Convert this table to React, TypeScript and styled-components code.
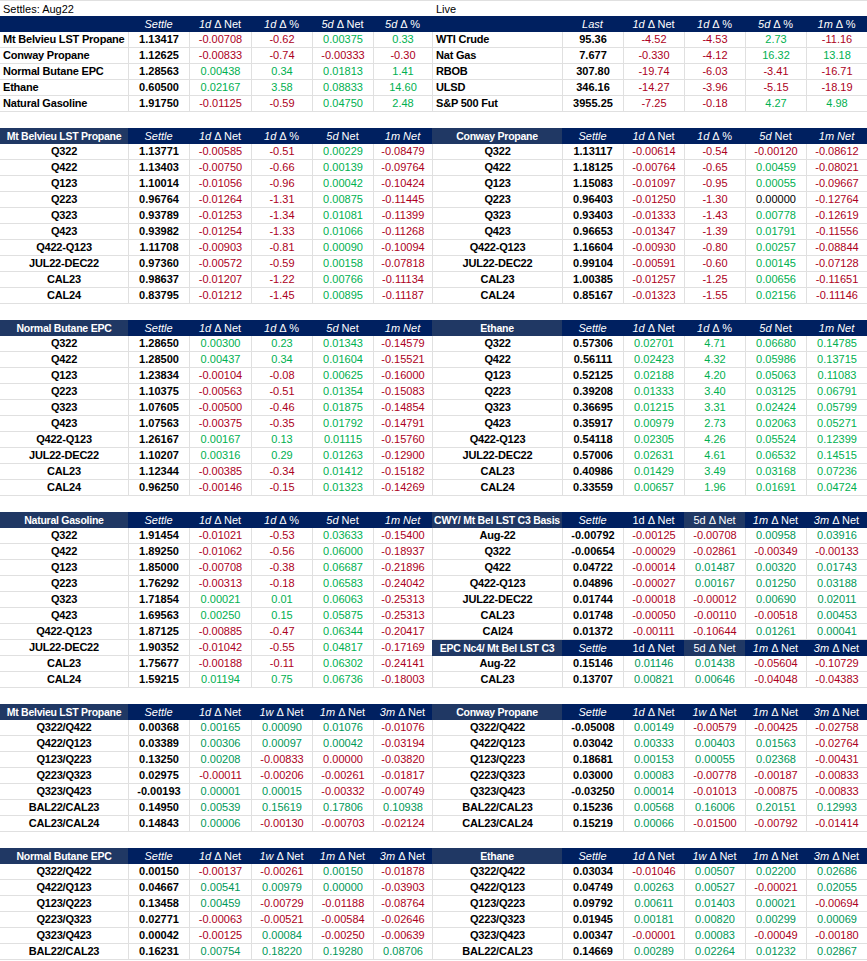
import React, { FC } from 'react'
import styled, { createGlobalStyle } from 'styled-components'

const GlobalStyle = createGlobalStyle`
  html, body {
    margin: 0;
    padding: 0;
    background: #fff;
  }
  body {
    font-family: 'Liberation Sans', Arial, sans-serif;
    font-size: 11px;
    color: #000;
  }
`

const NAVY = '#002060'
const NAVY_LIGHT = '#203864'
const RED = '#ac0022'
const GREEN_BRIGHT = '#00b050'
const GREEN_DEEP = '#009858'
const GRID = '#e0e0e0'

const LEFT_COLS = [128, 61, 62, 61, 61, 59]
const RIGHT_COLS = [130, 61, 61, 61, 61, 61]

type Tone = 'bright' | 'deep'

const Page = styled.div`
  width: 867px;
  display: flex;
  flex-direction: column;
  gap: 16px;
`

const Band = styled.div`
  display: grid;
  grid-template-columns: 432px 435px;
`

const Stack = styled.div`
  display: flex;
  flex-direction: column;
`

const Caption = styled.div`
  height: 16px;
  line-height: 16px;
  padding-left: ${({ $indent }: { $indent: number }) => $indent}px;
  border-top: 1px solid ${GRID};
  box-sizing: border-box;
  white-space: nowrap;
`

const Row = styled.div<{ $cols: number[] }>`
  display: grid;
  grid-template-columns: ${({ $cols }) => $cols.map((c) => `${c}px`).join(' ')};
  height: 16px;
`

const HeadCell = styled.div<{ $shade: string; $title?: boolean }>`
  background: ${({ $shade }) => $shade};
  color: #fff;
  text-align: center;
  line-height: 16px;
  white-space: nowrap;
  overflow: hidden;
  font-weight: ${({ $title }) => ($title ? 700 : 400)};
  font-size: ${({ $title }) => ($title ? '10.5px' : '11px')};
  letter-spacing: ${({ $title }) => ($title ? '-0.25px' : '0')};
  padding: 0 1px;
  box-sizing: border-box;

  em {
    font-style: italic;
  }
`

const Cell = styled.div<{
  $color: string
  $bold?: boolean
  $align?: 'left' | 'center'
  $first?: boolean
  $boxed?: boolean
}>`
  color: ${({ $color }) => $color};
  font-weight: ${({ $bold }) => ($bold ? 700 : 400)};
  text-align: ${({ $align }) => $align || 'center'};
  padding: ${({ $align }) => ($align === 'left' ? '0 0 0 3px' : '0')};
  letter-spacing: ${({ $first }) => ($first ? '-0.2px' : '0')};
  line-height: 15px;
  white-space: nowrap;
  overflow: hidden;
  box-sizing: border-box;
  border-bottom: 1px solid ${GRID};
  border-left: ${({ $first, $boxed }) =>
    $first && !$boxed ? 'none' : `1px solid ${GRID}`};
`

const renderHead = (spec: string) => {
  const parts = spec.replace(/^\^/, '').split('*')
  return parts.map((p, i) =>
    i % 2 === 1 ? <em key={i}>{p}</em> : <span key={i}>{p}</span>
  )
}

const valueColor = (v: string, tone: Tone) => {
  if (v.startsWith('k:')) return '#000'
  if (v.startsWith('r:')) return RED
  if (v.startsWith('g:')) return tone === 'bright' ? GREEN_BRIGHT : GREEN_DEEP
  if (v.startsWith('-')) return RED
  return tone === 'bright' ? GREEN_BRIGHT : GREEN_DEEP
}

const cleanValue = (v: string) => v.replace(/^[krg]:/, '')

interface ITableProps {
  title?: string
  heads: string[]
  rows: string[][]
  cols: number[]
  tone: Tone
  labelAlign?: 'left' | 'center'
  boxed?: boolean
}

const Table: FC<ITableProps> = ({
  title,
  heads,
  rows,
  cols,
  tone,
  labelAlign = 'center',
  boxed
}) => (
  <Stack>
    <Row $cols={cols}>
      <HeadCell $shade={title ? NAVY_LIGHT : NAVY} $title>
        {title}
      </HeadCell>
      {heads.map((h) => (
        <HeadCell key={h} $shade={h.startsWith('^') ? NAVY_LIGHT : NAVY}>
          {renderHead(h)}
        </HeadCell>
      ))}
    </Row>
    {rows.map(([label, settle, ...rest]) => (
      <Row $cols={cols} key={label}>
        <Cell $color="#000" $bold $align={labelAlign} $first $boxed={boxed}>
          {label}
        </Cell>
        <Cell $color="#000" $bold>
          {settle}
        </Cell>
        {rest.map((v, i) => (
          <Cell key={i} $color={valueColor(v, tone)}>
            {cleanValue(v)}
          </Cell>
        ))}
      </Row>
    ))}
  </Stack>
)

const CURVE_HEADS = ['*Settle*', '*1d* Δ Net', '*1d* Δ %', '*5d* Net', '*1m Net*']
const SPREAD_HEADS = ['*Settle*', '*1d* Δ Net', '*1w* Δ Net', '*1m* Δ Net', '*3m* Δ Net']
const BASIS_HEADS = ['*Settle*', '1d Δ Net', '^5d Δ Net', '*1m* Δ Net', '*3m* Δ Net']

const settles = [
  ['Mt Belvieu LST Propane', '1.13417', '-0.00708', '-0.62', '0.00375', '0.33'],
  ['Conway Propane', '1.12625', '-0.00833', '-0.74', '-0.00333', '-0.30'],
  ['Normal Butane EPC', '1.28563', '0.00438', '0.34', '0.01813', '1.41'],
  ['Ethane', '0.60500', '0.02167', '3.58', '0.08833', '14.60'],
  ['Natural Gasoline', '1.91750', '-0.01125', '-0.59', '0.04750', '2.48']
]

const live = [
  ['WTI Crude', '95.36', '-4.52', '-4.53', '2.73', '-11.16'],
  ['Nat Gas', '7.677', '-0.330', '-4.12', '16.32', '13.18'],
  ['RBOB', '307.80', '-19.74', '-6.03', '-3.41', '-16.71'],
  ['ULSD', '346.16', '-14.27', '-3.96', '-5.15', '-18.19'],
  ['S&P 500 Fut', '3955.25', '-7.25', '-0.18', '4.27', '4.98']
]

const mbPropane = [
  ['Q322', '1.13771', '-0.00585', '-0.51', '0.00229', '-0.08479'],
  ['Q422', '1.13403', '-0.00750', '-0.66', '0.00139', '-0.09764'],
  ['Q123', '1.10014', '-0.01056', '-0.96', '0.00042', '-0.10424'],
  ['Q223', '0.96764', '-0.01264', '-1.31', '0.00875', '-0.11445'],
  ['Q323', '0.93789', '-0.01253', '-1.34', '0.01081', '-0.11399'],
  ['Q423', '0.93982', '-0.01254', '-1.33', '0.01066', '-0.11268'],
  ['Q422-Q123', '1.11708', '-0.00903', '-0.81', '0.00090', '-0.10094'],
  ['JUL22-DEC22', '0.97360', '-0.00572', '-0.59', '0.00158', '-0.07818'],
  ['CAL23', '0.98637', '-0.01207', '-1.22', '0.00766', '-0.11134'],
  ['CAL24', '0.83795', '-0.01212', '-1.45', '0.00895', '-0.11187']
]

const conway = [
  ['Q322', '1.13117', '-0.00614', '-0.54', '-0.00120', '-0.08612'],
  ['Q422', '1.18125', '-0.00764', '-0.65', '0.00459', '-0.08021'],
  ['Q123', '1.15083', '-0.01097', '-0.95', '0.00055', '-0.09667'],
  ['Q223', '0.96403', '-0.01250', '-1.30', 'k:0.00000', '-0.12764'],
  ['Q323', '0.93403', '-0.01333', '-1.43', '0.00778', '-0.12619'],
  ['Q423', '0.96653', '-0.01347', '-1.39', '0.01791', '-0.11556'],
  ['Q422-Q123', '1.16604', '-0.00930', '-0.80', '0.00257', '-0.08844'],
  ['JUL22-DEC22', '0.99104', '-0.00591', '-0.60', '0.00145', '-0.07128'],
  ['CAL23', '1.00385', '-0.01257', '-1.25', '0.00656', '-0.11651'],
  ['CAL24', '0.85167', '-0.01323', '-1.55', '0.02156', '-0.11146']
]

const butane = [
  ['Q322', '1.28650', '0.00300', '0.23', '0.01343', '-0.14579'],
  ['Q422', '1.28500', '0.00437', '0.34', '0.01604', '-0.15521'],
  ['Q123', '1.23834', '-0.00104', '-0.08', '0.00625', '-0.16000'],
  ['Q223', '1.10375', '-0.00563', '-0.51', '0.01354', '-0.15083'],
  ['Q323', '1.07605', '-0.00500', '-0.46', '0.01875', '-0.14854'],
  ['Q423', '1.07563', '-0.00375', '-0.35', '0.01792', '-0.14791'],
  ['Q422-Q123', '1.26167', '0.00167', '0.13', '0.01115', '-0.15760'],
  ['JUL22-DEC22', '1.10207', '0.00316', '0.29', '0.01263', '-0.12900'],
  ['CAL23', '1.12344', '-0.00385', '-0.34', '0.01412', '-0.15182'],
  ['CAL24', '0.96250', '-0.00146', '-0.15', '0.01323', '-0.14269']
]

const ethane = [
  ['Q322', '0.57306', '0.02701', '4.71', '0.06680', '0.14785'],
  ['Q422', '0.56111', '0.02423', '4.32', '0.05986', '0.13715'],
  ['Q123', '0.52125', '0.02188', '4.20', '0.05063', '0.11083'],
  ['Q223', '0.39208', '0.01333', '3.40', '0.03125', '0.06791'],
  ['Q323', '0.36695', '0.01215', '3.31', '0.02424', '0.05799'],
  ['Q423', '0.35917', '0.00979', '2.73', '0.02063', '0.05271'],
  ['Q422-Q123', '0.54118', '0.02305', '4.26', '0.05524', '0.12399'],
  ['JUL22-DEC22', '0.57006', '0.02631', '4.61', '0.06532', '0.14515'],
  ['CAL23', '0.40986', '0.01429', '3.49', '0.03168', '0.07236'],
  ['CAL24', '0.33559', '0.00657', '1.96', '0.01691', '0.04724']
]

const gasoline = [
  ['Q322', '1.91454', '-0.01021', '-0.53', '0.03633', '-0.15400'],
  ['Q422', '1.89250', '-0.01062', '-0.56', '0.06000', '-0.18937'],
  ['Q123', '1.85000', '-0.00708', '-0.38', '0.06687', '-0.21896'],
  ['Q223', '1.76292', '-0.00313', '-0.18', '0.06583', '-0.24042'],
  ['Q323', '1.71854', '0.00021', '0.01', '0.06063', '-0.25313'],
  ['Q423', '1.69563', '0.00250', '0.15', '0.05875', '-0.25313'],
  ['Q422-Q123', '1.87125', '-0.00885', '-0.47', '0.06344', '-0.20417'],
  ['JUL22-DEC22', '1.90352', '-0.01042', '-0.55', '0.04817', '-0.17169'],
  ['CAL23', '1.75677', '-0.00188', '-0.11', '0.06302', '-0.24141'],
  ['CAL24', '1.59215', '0.01194', '0.75', '0.06736', '-0.18003']
]

const cwyBasis = [
  ['Aug-22', '-0.00792', '-0.00125', '-0.00708', '0.00958', '0.03916'],
  ['Q322', '-0.00654', '-0.00029', '-0.02861', '-0.00349', '-0.00133'],
  ['Q422', '0.04722', '-0.00014', '0.01487', '0.00320', '0.01743'],
  ['Q422-Q123', '0.04896', '-0.00027', '0.00167', '0.01250', '0.03188'],
  ['JUL22-DEC22', '0.01744', '-0.00018', '-0.00012', '0.00690', '0.02011'],
  ['CAL23', '0.01748', '-0.00050', '-0.00110', '-0.00518', '0.00453'],
  ['CAl24', '0.01372', '-0.00111', '-0.10644', '0.01261', '0.00041']
]

const epcBasis = [
  ['Aug-22', '0.15146', '0.01146', '0.01438', '-0.05604', '-0.10729'],
  ['CAL23', '0.13707', '0.00821', '0.00646', '-0.04048', '-0.04383']
]

const mbSpreads = [
  ['Q322/Q422', '0.00368', '0.00165', '0.00090', '0.01076', '-0.01076'],
  ['Q422/Q123', '0.03389', '0.00306', '0.00097', '0.00042', '-0.03194'],
  ['Q123/Q223', '0.13250', '0.00208', '-0.00833', 'r:0.00000', '-0.03820'],
  ['Q223/Q323', '0.02975', '-0.00011', '-0.00206', '-0.00261', '-0.01817'],
  ['Q323/Q423', '-0.00193', '0.00001', '0.00015', '-0.00332', '-0.00749'],
  ['BAL22/CAL23', '0.14950', '0.00539', '0.15619', '0.17806', '0.10938'],
  ['CAL23/CAL24', '0.14843', '0.00006', '-0.00130', '-0.00703', '-0.02124']
]

const conwaySpreads = [
  ['Q322/Q422', '-0.05008', '0.00149', '-0.00579', '-0.00425', '-0.02758'],
  ['Q422/Q123', '0.03042', '0.00333', '0.00403', '0.01563', '-0.02764'],
  ['Q123/Q223', '0.18681', '0.00153', '0.00055', '0.02368', '-0.00431'],
  ['Q223/Q323', '0.03000', '0.00083', '-0.00778', '-0.00187', '-0.00833'],
  ['Q323/Q423', '-0.03250', '0.00014', '-0.01013', '-0.00875', '-0.00833'],
  ['BAL22/CAL23', '0.15236', '0.00568', '0.16006', '0.20151', '0.12993'],
  ['CAL23/CAL24', '0.15219', '0.00066', '-0.01500', '-0.00792', '-0.01414']
]

const butaneSpreads = [
  ['Q322/Q422', '0.00150', '-0.00137', '-0.00261', '0.00150', '-0.01878'],
  ['Q422/Q123', '0.04667', '0.00541', '0.00979', 'g:0.00000', '-0.03903'],
  ['Q123/Q223', '0.13458', '0.00459', '-0.00729', '-0.01188', '-0.08764'],
  ['Q223/Q323', '0.02771', '-0.00063', '-0.00521', '-0.00584', '-0.02646'],
  ['Q323/Q423', '0.00042', '-0.00125', '0.00084', '-0.00250', '-0.00639'],
  ['BAL22/CAL23', '0.16231', '0.00754', '0.18220', '0.19280', '0.08706']
]

const ethaneSpreads = [
  ['Q322/Q422', '0.03034', '-0.01046', '0.00507', '0.02200', '0.02686'],
  ['Q422/Q123', '0.04749', '0.00263', '0.00527', '-0.00021', '0.02055'],
  ['Q123/Q223', '0.09792', '0.00611', '0.01403', '0.00021', '-0.00694'],
  ['Q223/Q323', '0.01945', '0.00181', '0.00820', '0.00299', '0.00069'],
  ['Q323/Q423', '0.00347', '-0.00001', '0.00083', '-0.00049', '-0.00180'],
  ['BAL22/CAL23', '0.14669', '0.00289', '0.02264', '0.01232', '0.02867']
]

const App: FC = () => (
  <>
    <GlobalStyle />
    <Page>
      <Band>
        <Stack>
          <Caption $indent={3}>Settles: Aug22</Caption>
          <Table
            heads={['*Settle*', '*1d* Δ Net', '*1d* Δ %', '*5d* Δ Net', '*5d* Δ %']}
            rows={settles}
            cols={LEFT_COLS}
            tone="bright"
            labelAlign="left"
          />
        </Stack>
        <Stack>
          <Caption $indent={4}>Live</Caption>
          <Table
            heads={['*Last*', '*1d* Δ Net', '*1d* Δ %', '*5d* Δ %', '*1m* Δ %']}
            rows={live}
            cols={RIGHT_COLS}
            tone="bright"
            labelAlign="left"
            boxed
          />
        </Stack>
      </Band>
      <Band>
        <Table title="Mt Belvieu LST Propane" heads={CURVE_HEADS} rows={mbPropane} cols={LEFT_COLS} tone="bright" />
        <Table title="Conway Propane" heads={CURVE_HEADS} rows={conway} cols={RIGHT_COLS} tone="bright" boxed />
      </Band>
      <Band>
        <Table title="Normal Butane EPC" heads={CURVE_HEADS} rows={butane} cols={LEFT_COLS} tone="bright" />
        <Table title="Ethane" heads={CURVE_HEADS} rows={ethane} cols={RIGHT_COLS} tone="bright" boxed />
      </Band>
      <Band>
        <Table title="Natural Gasoline" heads={CURVE_HEADS} rows={gasoline} cols={LEFT_COLS} tone="bright" />
        <Stack>
          <Table title="CWY/ Mt Bel LST C3 Basis" heads={BASIS_HEADS} rows={cwyBasis} cols={RIGHT_COLS} tone="deep" boxed />
          <Table title="EPC Nc4/ Mt Bel LST C3" heads={BASIS_HEADS} rows={epcBasis} cols={RIGHT_COLS} tone="deep" boxed />
        </Stack>
      </Band>
      <Band>
        <Table title="Mt Belvieu LST Propane" heads={SPREAD_HEADS} rows={mbSpreads} cols={LEFT_COLS} tone="deep" />
        <Table title="Conway Propane" heads={SPREAD_HEADS} rows={conwaySpreads} cols={RIGHT_COLS} tone="deep" boxed />
      </Band>
      <Band>
        <Table title="Normal Butane EPC" heads={SPREAD_HEADS} rows={butaneSpreads} cols={LEFT_COLS} tone="deep" />
        <Table title="Ethane" heads={SPREAD_HEADS} rows={ethaneSpreads} cols={RIGHT_COLS} tone="deep" boxed />
      </Band>
    </Page>
  </>
)

export default App
